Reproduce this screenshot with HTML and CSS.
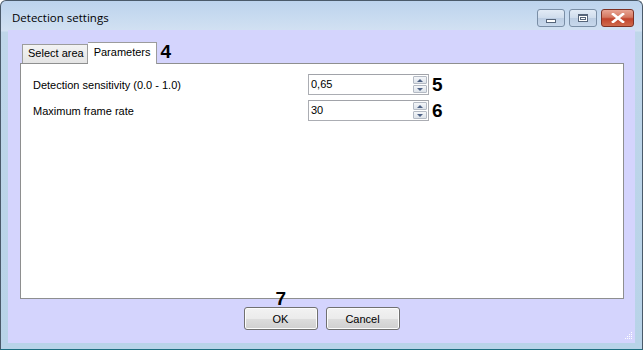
FILE: index.html
```html
<!DOCTYPE html>
<html lang="en">
<head>
  <meta charset="UTF-8" />
  <title>Detection settings</title>
  <link rel="stylesheet" href="styles.css">
</head>
<body>
  <div class="window">
    <div class="titlebar">
      <span class="title">Detection settings</span>
      <div class="controls">
        <span class="ctl ctl-min"><i></i></span>
        <span class="ctl ctl-max"><i></i></span>
        <span class="ctl ctl-close">
          <svg width="14" height="10" viewBox="0 0 14 10"><path d="M2 1 L12 9 M12 1 L2 9" stroke="#fff" stroke-width="2.6" stroke-linecap="square"/></svg>
        </span>
      </div>
    </div>

    <div class="client">
      <div class="tabs">
        <span class="tab">Select area</span>
        <span class="tab active">Parameters</span>
        <span class="mark">4</span>
      </div>

      <div class="panel">
        <div class="row">
          <label>Detection sensitivity (0.0 - 1.0)</label>
          <div class="spin">
            <span class="val">0,65</span>
            <span class="arrows"><b class="up"></b><b class="down"></b></span>
          </div>
          <span class="mark">5</span>
        </div>
        <div class="row">
          <label>Maximum frame rate</label>
          <div class="spin">
            <span class="val">30</span>
            <span class="arrows"><b class="up"></b><b class="down"></b></span>
          </div>
          <span class="mark">6</span>
        </div>
      </div>

      <div class="buttons">
        <div class="btn-wrap">
          <span class="mark mark-ok">7</span>
          <button>OK</button>
        </div>
        <button>Cancel</button>
      </div>
      <span class="grip">
        <svg width="8" height="8" viewBox="0 0 8 8" fill="#fff"><rect x="6" y="0" width="1" height="1"/><rect x="4" y="2" width="1" height="1"/><rect x="6" y="2" width="1" height="1"/><rect x="2" y="4" width="1" height="1"/><rect x="4" y="4" width="1" height="1"/><rect x="6" y="4" width="1" height="1"/><rect x="0" y="6" width="1" height="1"/><rect x="2" y="6" width="1" height="1"/><rect x="4" y="6" width="1" height="1"/><rect x="6" y="6" width="1" height="1"/></svg>
      </span>
    </div>
  </div>
</body>
</html>
```

FILE: styles.css
```css
* {
  box-sizing: border-box;
  margin: 0;
  padding: 0;
}

body {
  width: 643px;
  height: 350px;
  overflow: hidden;
  font-family: 'Liberation Sans', Arial, sans-serif;
  font-size: 11px;
  color: #000;
  background: #fff;
}

.window {
  width: 643px;
  height: 350px;
  border: 1px solid #4a5a6a;
  border-bottom-color: #1d6e80;
  border-radius: 6px 6px 0 0;
  background: linear-gradient(to bottom, #bcd3ed 0, #d2e1f2 30px, #bfd6ea 31px, #b8d3e8 100%);
  display: flex;
  flex-direction: column;
  padding: 0 7px 6px 7px;
}

.titlebar {
  height: 29px;
  display: flex;
  align-items: flex-start;
  justify-content: space-between;
}

.title {
  font-family: 'Open Sans', 'Liberation Sans', sans-serif;
  font-size: 11.5px;
  margin: 9px 0 0 4px;
}

.controls {
  display: flex;
  gap: 4px;
  margin-top: 8px;
  margin-right: 1px;
}

.ctl {
  width: 28px;
  height: 18px;
  border: 1px solid #7a8ea6;
  border-radius: 3px;
  background: linear-gradient(to bottom, #e2ebf6 0, #cfdcec 50%, #bccde3 51%, #c8d8ec 100%);
  display: flex;
  align-items: center;
  justify-content: center;
}

.ctl-min i {
  width: 10px;
  height: 4px;
  margin-top: 5px;
  border: 1px solid #56657a;
  background: #fff;
}

.ctl-max i {
  width: 10px;
  height: 8px;
  border: 1px solid #56657a;
  border-top-width: 2px;
  background: #fff;
  box-shadow: inset 0 0 0 1px #fff, inset 0 0 0 2px #56657a;
}

.ctl-close {
  width: 33px;
  border-color: #7e3124;
  background: linear-gradient(to bottom, #e8a493 0, #d47861 45%, #c2432c 55%, #cf6a4c 100%);
}

.client {
  flex: 1;
  position: relative;
  background: #d4d4fd;
  padding: 11px 11px 0 12px;
  display: flex;
  flex-direction: column;
}

.tabs {
  display: flex;
  align-items: flex-end;
  height: 22px;
  padding-left: 2px;
}

.tab {
  height: 19px;
  padding: 2px 3px 0 5px;
  border: 1px solid #9c9c9c;
  border-bottom: none;
  background: linear-gradient(to bottom, #f3f3f3, #e4e4e4);
}

.tab.active {
  height: 22px;
  padding: 3px 5px 0 6px;
  background: #fff;
  border-left: none;
  position: relative;
  top: 1px;
}

.mark {
  font-family: 'Liberation Sans', Arial, sans-serif;
  font-weight: bold;
  font-size: 19px;
  line-height: 19px;
}

.tabs .mark {
  margin: 0 0 2px 4px;
}

.panel {
  height: 236px;
  background: #fff;
  border: 1px solid #8e8f8f;
  padding: 10px 0 0 12px;
  display: flex;
  flex-direction: column;
  gap: 5px;
}

.row {
  display: flex;
  align-items: center;
  height: 21px;
}

.row label {
  width: 275px;
}

.spin {
  width: 121px;
  height: 21px;
  border: 1px solid #abadb3;
  border-top-color: #a1a3a9;
  display: flex;
  align-items: stretch;
}

.val {
  flex: 1;
  padding: 3px 0 0 2px;
}

.arrows {
  width: 15px;
  display: flex;
  flex-direction: column;
  padding: 1px 1px 1px 0;
  gap: 1px;
}

.arrows b {
  flex: 1;
  border: 1px solid #b4bac4;
  border-radius: 1px;
  background: linear-gradient(to bottom, #f4f6f9, #dde3ea);
  position: relative;
}

.arrows b::after {
  content: "";
  position: absolute;
  left: 3px;
  top: 2px;
  border-left: 3px solid transparent;
  border-right: 3px solid transparent;
}

.arrows .up::after {
  border-bottom: 3px solid #4d6185;
}

.arrows .down::after {
  border-top: 3px solid #4d6185;
}

.row .mark {
  margin-left: 3px;
}

.buttons {
  display: flex;
  justify-content: center;
  gap: 8px;
  margin-top: 8px;
  padding-right: 1px;
}

.btn-wrap {
  position: relative;
}

.mark-ok {
  position: absolute;
  left: 32px;
  top: -18px;
}

button {
  width: 74px;
  height: 23px;
  font-family: 'Liberation Sans', Arial, sans-serif;
  font-size: 11px;
  color: #000;
  border: 1px solid #707070;
  border-radius: 3px;
  background: linear-gradient(to bottom, #f2f2f2 0, #ebebeb 50%, #dddddd 51%, #cfcfcf 100%);
  box-shadow: inset 0 0 0 1px #fcfcfc;
}

.grip {
  position: absolute;
  right: 2px;
  bottom: 3px;
  line-height: 0;
}
```
